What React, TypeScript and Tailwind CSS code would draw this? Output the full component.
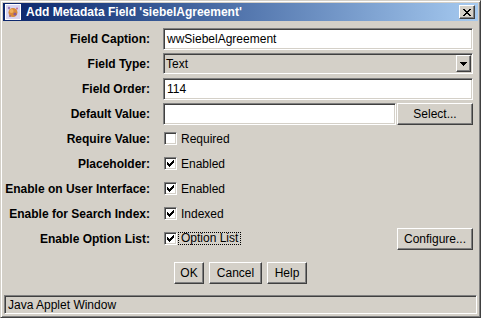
import React from "react";

const sunken =
  "border border-t-[#808080] border-l-[#808080] border-r-white border-b-white shadow-[inset_1px_1px_0_#404040,inset_-1px_-1px_0_#d4d0c8]";
const raised =
  "border border-t-white border-l-white border-r-[#404040] border-b-[#404040] shadow-[inset_-1px_-1px_0_#808080]";

function Row({ label, children }: { label: string; children: React.ReactNode }) {
  return (
    <div className="flex h-[25px] items-center">
      <div className="w-[147px] text-right text-[12px] font-bold leading-none">{label}</div>
      <div className="ml-[13px] flex flex-1 items-center">{children}</div>
    </div>
  );
}

function Check({ checked }: { checked: boolean }) {
  return (
    <div className={`ml-[1px] h-[13px] w-[13px] shrink-0 bg-white ${sunken}`}>
      {checked && (
        <svg width="11" height="11" viewBox="0 0 11 11" shapeRendering="crispEdges" className="block">
          {/* classic 7x7 tick, 3px columns */}
          <path d="M2 4h1v3H2zM3 5h1v3H3zM4 6h1v3H4zM5 5h1v3H5zM6 4h1v3H6zM7 3h1v3H7zM8 2h1v3H8z" fill="#000" />
        </svg>
      )}
    </div>
  );
}

function Btn({ children, w }: { children: React.ReactNode; w: string }) {
  return (
    <div className={`flex h-[22px] items-center justify-center bg-[#d4d0c8] text-[12px] leading-none ${w} ${raised}`}>
      {children}
    </div>
  );
}

function WinIcon() {
  return (
    <svg width="16" height="16" viewBox="0 0 16 16" className="block">
      <rect x="0" y="0" width="16" height="16" fill="#d8d4f0" />
      <rect x="0.5" y="0.5" width="15" height="15" fill="none" stroke="#ffffff" />
      <circle cx="8" cy="8.5" r="4.5" fill="#d88a3a" />
      <circle cx="6.5" cy="7" r="2" fill="#f0b060" />
      <circle cx="10" cy="10" r="1.6" fill="#8a5a9a" />
      <circle cx="4" cy="4" r="1.2" fill="#9a7ab8" />
      <circle cx="12" cy="4.5" r="1" fill="#c070a0" />
      <circle cx="5" cy="12" r="1" fill="#a06080" />
    </svg>
  );
}

export default function App() {
  return (
    <div className="h-[318px] w-[481px] overflow-hidden bg-[#d4d0c8] font-['Liberation_Sans',Arial,sans-serif] text-black">
      <div className="flex h-full w-full flex-col border border-t-[#d4d0c8] border-l-[#d4d0c8] border-r-[#404040] border-b-[#404040] p-[2px] shadow-[inset_1px_1px_0_#ffffff,inset_-1px_-1px_0_#808080]">
        {/* title bar */}
        <div className="flex h-[18px] shrink-0 items-center bg-gradient-to-r from-[#0a246a] to-[#a6caf0] pl-[2px] pr-[3px]">
          <WinIcon />
          <span className="ml-[5px] flex-1 text-[12px] font-bold leading-none text-white">
            Add Metadata Field 'siebelAgreement'
          </span>
          <div className={`flex h-[14px] w-[16px] items-center justify-center bg-[#d4d0c8] ${raised}`}>
            <svg width="8" height="7" viewBox="0 0 8 7" shapeRendering="crispEdges" className="block">
              <path d="M0 0h2v1H0zM6 0h2v1H6zM1 1h2v1H1zM5 1h2v1H5zM2 2h4v1H2zM3 3h2v1H3zM2 4h4v1H2zM1 5h2v1H1zM5 5h2v1H5zM0 6h2v1H0zM6 6h2v1H6z" fill="#000" />
            </svg>
          </div>
        </div>

        {/* form */}
        <div className="mt-[5px] flex flex-col pr-[5px]">
          <Row label="Field Caption:">
            <div className={`flex h-[22px] flex-1 items-center bg-white pl-[3px] text-[12px] ${sunken}`}>wwSiebelAgreement</div>
          </Row>
          <Row label="Field Type:">
            <div className={`flex h-[21px] flex-1 items-center bg-[#d4d0c8] pl-[2px] pr-[1px] text-[12px] ${sunken}`}>
              <span className="flex-1">Text</span>
              <div className={`flex h-[17px] w-[15px] items-center justify-center bg-[#d4d0c8] ${raised}`}>
                <svg width="7" height="4" viewBox="0 0 7 4" shapeRendering="crispEdges" className="block">
                  <path d="M0 0h7v1H0zM1 1h5v1H1zM2 2h3v1H2zM3 3h1v1H3z" fill="#000" />
                </svg>
              </div>
            </div>
          </Row>
          <Row label="Field Order:">
            <div className={`flex h-[22px] flex-1 items-center bg-white pl-[3px] text-[12px] ${sunken}`}>114</div>
          </Row>
          <Row label="Default Value:">
            <div className={`h-[22px] flex-1 bg-white ${sunken}`} />
            <div className="ml-[1px]">
              <Btn w="w-[76px]">Select...</Btn>
            </div>
          </Row>
          <Row label="Require Value:">
            <Check checked={false} />
            <span className="ml-[4px] text-[12px]">Required</span>
          </Row>
          <Row label="Placeholder:">
            <Check checked />
            <span className="ml-[4px] text-[12px]">Enabled</span>
          </Row>
          <Row label="Enable on User Interface:">
            <Check checked />
            <span className="ml-[4px] text-[12px]">Enabled</span>
          </Row>
          <Row label="Enable for Search Index:">
            <Check checked />
            <span className="ml-[4px] text-[12px]">Indexed</span>
          </Row>
          <Row label="Enable Option List:">
            <Check checked />
            <span className="ml-[1px] border border-dotted border-black px-[2px] text-[12px] leading-[11px]">Option List</span>
            <div className="ml-auto">
              <Btn w="w-[76px]">Configure...</Btn>
            </div>
          </Row>
        </div>

        {/* dialog buttons */}
        <div className="mt-[11px] flex justify-center gap-[5px]">
          <Btn w="w-[30px]">OK</Btn>
          <Btn w="w-[53px]">Cancel</Btn>
          <Btn w="w-[40px]">Help</Btn>
        </div>

        {/* status bar */}
        <div className={`mx-[1px] mt-[11px] flex h-[19px] items-center pl-[3px] text-[12px] ${sunken}`}>
          Java Applet Window
        </div>
      </div>
    </div>
  );
}
